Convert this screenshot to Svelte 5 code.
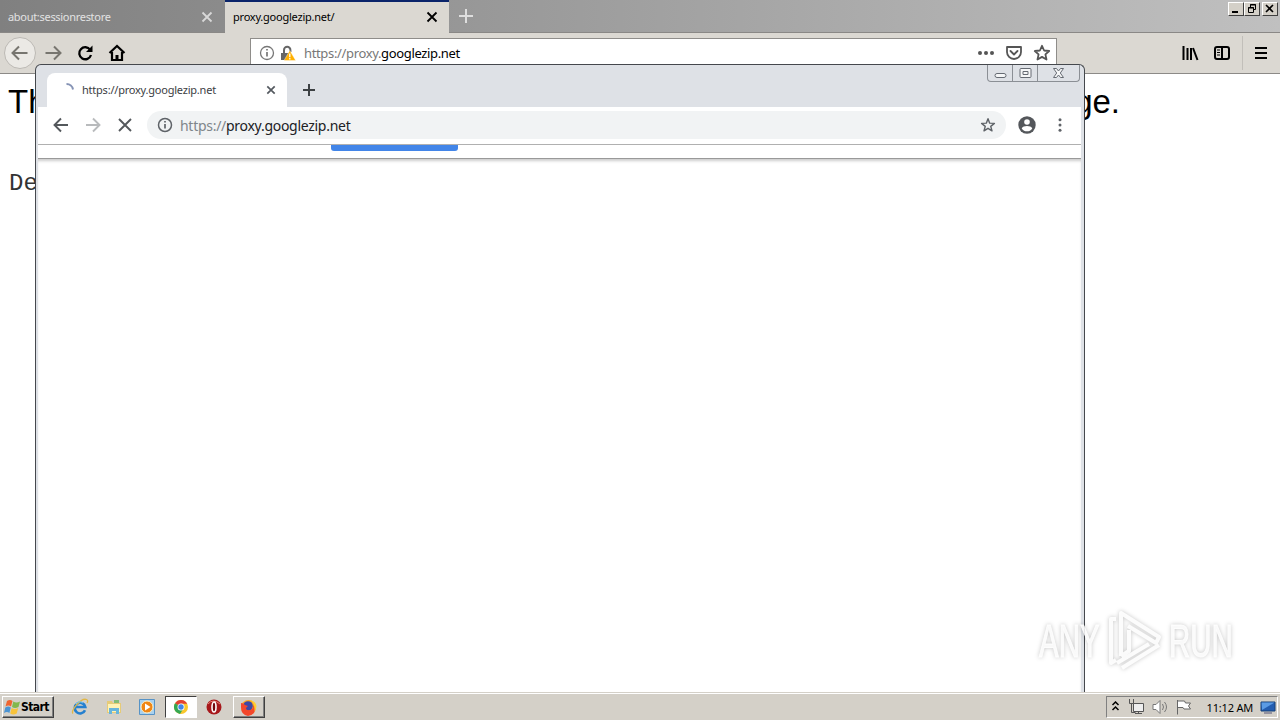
<script>
  const siteHost = 'googlezip.net';
  const tabs = [
    { title: 'about:sessionrestore', active: false },
    { title: 'proxy.googlezip.net/', active: true }
  ];
  let clock = '11:12 AM';
</script>

<div class="desktop">
  <div class="firefox">
    <div class="ff-tabs">
      {#each tabs as tab}
        <div class="ff-tab" class:active={tab.active}>
          <span>{tab.title}</span>
          <svg width="12" height="12" viewBox="0 0 12 12"><path d="M1.5 1.5l9 9M10.500 1.500l-9 9" /></svg>
        </div>
      {/each}
      <svg class="ff-plus" width="16" height="16" viewBox="0 0 16 16"><path d="M8 1v14M1 8h14" /></svg>
      <div class="ff-controls">
        <button aria-label="Minimize"><svg width="14" height="12"><path d="M3 9h6" stroke="#000" stroke-width="2" /></svg></button>
        <button aria-label="Restore"><svg width="14" height="12" fill="none" stroke="#000"><path d="M5.500 4V1.500h5v5H9M5 2h6M3.500 4.500h5v5h-5zM3 5h6" /></svg></button>
        <button class="last" aria-label="Close"><svg width="14" height="12"><path d="M3 2l7 7M10 2l-7 7" stroke="#000" stroke-width="1.600" /></svg></button>
      </div>
    </div>

    <div class="ff-bar">
      <div class="ff-nav">
        <div class="round"><svg width="18" height="18" viewBox="0 0 18 18"><path d="M16.500 9H2M8 2.500L1.500 9 8 15.500" /></svg></div>
        <svg class="dim" width="18" height="18" viewBox="0 0 18 18"><path d="M1.500 9H16M10 2.500L16.500 9 10 15.500" /></svg>
        <svg width="18" height="18" viewBox="0 0 18 18"><path d="M14.200 5.800A6 6 0 1 0 15 11" stroke-width="2.300" /><path d="M16.500 1.500v6.500H10z" fill="#000" stroke="none" /></svg>
        <svg width="18" height="18" viewBox="0 0 18 18"><path d="M1.500 9L9 2l7.500 7M4 8v8h10V8" stroke-width="2.200" /><path d="M7.500 16v-5h3v5z" fill="#000" stroke="none" /></svg>
      </div>
      <div class="ff-url">
        <svg width="16" height="16" viewBox="0 0 16 16" fill="none" stroke="#777"><circle cx="8" cy="8" r="6.500" stroke-width="1.300" /><path d="M8 7v4.500M8 4v1.600" stroke-width="1.700" /></svg>
        <svg class="lock" width="16" height="16" viewBox="0 0 16 16"><path d="M4 8V5a3.200 3.200 0 0 1 6.400 0v2" fill="none" stroke="#666" stroke-width="2" /><path d="M1 8h10v7H1z" fill="#666" /><path d="M9.800 5.500L15.700 15.500H4z" fill="#ffb000" stroke="#fff" stroke-width=".4" /><path d="M9.800 8.500v3.700M9.800 13v1.500" stroke="#fff" stroke-width="1.300" /></svg>
        <span class="address"><i>https://proxy.</i>{siteHost}</span>
        <svg width="18" height="16" viewBox="0 0 18 16" fill="#555"><circle cx="3" cy="8" r="2" /><circle cx="9" cy="8" r="2" /><circle cx="15" cy="8" r="2" /></svg>
        <svg width="18" height="16" viewBox="0 0 18 16" fill="none" stroke="#555" stroke-width="1.800" stroke-linecap="round" stroke-linejoin="round"><path d="M2 2h14v5a7 7 0 0 1-14 0zM5.500 6l3.500 3.500L12.500 6" /></svg>
        <svg width="18" height="18" viewBox="0 0 18 18" fill="none" stroke="#555" stroke-width="1.800" stroke-linejoin="round"><path d="M9 1.800l2.100 4.700 5.100.5-3.800 3.400 1.100 5.100L9 12.900l-4.500 2.600 1.100-5.100L1.800 7l5.100-.5z" /></svg>
      </div>
      <div class="ff-tools">
        <svg width="18" height="16" viewBox="0 0 18 16" stroke="#000" stroke-width="2"><path d="M2.500 1v14M6.500 3v12M10 3v12M12 3l4.500 12" /></svg>
        <svg width="18" height="16" viewBox="0 0 18 16" fill="none" stroke="#000" stroke-width="2"><rect x="2" y="2" width="14" height="12" rx="2" /><path d="M9 2v12" /><path d="M4 5h3M4 7.500h3M4 10h3" stroke-width="1" /></svg>
        <div class="split"></div>
        <svg width="16" height="16" viewBox="0 0 16 16" stroke="#000" stroke-width="2"><path d="M2 3h12M2 8h12M2 13h12" /></svg>
      </div>
    </div>

    <div class="ff-page">
      <h1><span>Th</span><span>ge.</span></h1>
      <pre>De</pre>
    </div>
  </div>

  <div class="taskbar">
    <button class="start">
      <svg width="17" height="16" viewBox="0 0 17 16"><path d="M3 2q3-2 5.500 0L7 7.500q-2.500-2-5.500 0z" fill="#ef6530" /><path d="M9.300 2.500q3 2 6.700 0l-1.500 5.500q-3.500 2-6.500 0z" fill="#82b84d" /><path d="M1.300 8.500q3-2 5.500 0L5.400 14Q3 12 0 14z" fill="#4b94d3" /><path d="M7.700 9q3 2 6.500 0l-1.500 5.500q-3.500 2-6.500 0z" fill="#f8c33a" /></svg>
      Start
    </button>
    <div class="quick">
      <svg width="18" height="18" viewBox="0 0 18 18" fill="none"><path d="M14 12.200A5.300 5.300 0 1 1 14.300 9H5" stroke="#2580cf" stroke-width="2.600" /><path d="M2 15.500C-1 13 10-.5 15.500 1.500q2 1 .5 3.500" stroke="#e1b745" stroke-width="1.300" /><path d="M5 6q3-4 7-1" stroke="#75c9f2" /></svg>
      <svg width="18" height="18" viewBox="0 0 18 18"><path d="M2 3h5l1 2h8v10H2z" fill="#e6cb78" /><path d="M3 6h12v8H3z" fill="#fff3b5" /><path d="M4 10h10v6h-3v-3H7v3H4z" fill="#68b5dc" /><path d="M9 2h5v3H9z" fill="#83bd78" /></svg>
      <svg width="18" height="18" viewBox="0 0 18 18"><path d="M1.500 1.500h15v15h-15z" fill="#a8d1ef" stroke="#5793c6" /><circle cx="9" cy="9" r="6" fill="#ef8614" stroke="#fff0c5" /><path d="M7 5.500v7L12.500 9z" fill="#fff" /></svg>
      <div class="task pressed">
        <svg width="16" height="16" viewBox="0 0 16 16"><circle cx="8" cy="8" r="7" fill="#f9c72c" /><path d="M8 8L2 4.300A7 7 0 0 1 14.200 4.700H8z" fill="#e34133" /><path d="M8 8l-6-3.700a7 7 0 0 0 5 10.600l3.500-5.500z" fill="#35a853" /><circle cx="8" cy="8" r="3.500" fill="#fff" /><circle cx="8" cy="8" r="2.700" fill="#4285e8" /></svg>
      </div>
      <svg class="opera" width="16" height="16" viewBox="0 0 16 16"><circle cx="8" cy="8" r="7.500" fill="#a7181b" /><path d="M2 5q5-6 12 0" fill="none" stroke="#e78074" stroke-width="1" /><ellipse cx="8" cy="8" rx="2" ry="5" fill="#74080d" stroke="#fff" stroke-width="1.600" /></svg>
      <div class="task">
        <svg width="17" height="17" viewBox="0 0 17 17"><circle cx="8.500" cy="8.500" r="7.500" fill="#ffa51c" /><circle cx="8" cy="7" r="4.800" fill="#3d48a5" /><path d="M1 4q3 0 4 2l3 1q-2 1-2 3 3 3 7-1v-3q3 4 1 8-3 3-6 3-7-1-7-9z" fill="#f3472b" /><path d="M9.500 1q6 3 5 11 2-2 2-5-1-5-7-6z" fill="#ffcf35" /></svg>
      </div>
    </div>
    <div class="tray">
      <svg width="9" height="12" viewBox="0 0 9 12" fill="none" stroke="#000" stroke-width="1.500"><path d="M1.500 4l3-3 3 3M1.500 9l3-3 3 3" /></svg>
      <svg width="18" height="18" viewBox="0 0 18 18" fill="#eee" stroke="#555"><path d="M6.500 5.500h10v8h-10zM8 15.500h7M11.500 13.500v2" /><path d="M2.500 1v4.500h4V1M4.500 5.500v9h4" fill="none" /></svg>
      <svg width="18" height="18" viewBox="0 0 18 18" fill="#fff" stroke="#777"><path d="M2 6.500h3l4-4v13l-4-4H2z" /><path d="M11.500 6q2 3 0 6M13.500 4q4 5 0 10" fill="none" /></svg>
      <svg width="18" height="18" viewBox="0 0 18 18" fill="#fff" stroke="#666"><path d="M2.500 2v14.500M2.500 3h7l1 2h5l-2 3 2 3H9l-1-1.500H2.500z" /></svg>
      <span>{clock}</span>
      <svg width="16" height="16" viewBox="0 0 16 16"><path d="M1 3h14v9H1z" fill="#235db0" stroke="#174176" /><path d="M1.500 3.500h13L2 11z" fill="#5b9be4" /><path d="M4 14h8" stroke="#557" /></svg>
    </div>
  </div>

  <div class="chrome">
    <div class="cr-strip">
      <div class="cr-tab">
        <svg width="16" height="16" viewBox="0 0 16 16" fill="none" stroke="#8593b5" stroke-width="2"><path d="M6.500 2A6.500 6.500 0 0 1 13 7.500" /></svg>
        <span>https://proxy.{siteHost}</span>
        <svg width="10" height="10" viewBox="0 0 10 10" stroke="#555a60" stroke-width="1.700"><path d="M1.300 1.300l7.400 7.400M8.700 1.300L1.300 8.700" /></svg>
      </div>
      <svg class="cr-plus" width="14" height="14" viewBox="0 0 14 14" stroke="#3c4043" stroke-width="2"><path d="M7 1v12M1 7h12" /></svg>
      <div class="cr-controls">
        <div><svg width="13" height="13" viewBox="0 0 13 13"><rect x="1" y="6.500" width="11" height="4" rx="2" /></svg></div>
        <div><svg width="13" height="13" viewBox="0 0 13 13"><rect x="1" y="1.500" width="11" height="9" rx="1" /><path d="M4 4.500h5v3H4z" /></svg></div>
        <div class="wide"><svg width="13" height="13" viewBox="0 0 13 13"><path d="M1.500 1.500h3l2 2.500 2-2.500h3L8.300 6l3.200 4.500h-3l-2-2.500-2 2.500h-3L4.700 6z" /></svg></div>
      </div>
    </div>
    <div class="cr-bar">
      <svg width="16" height="16" viewBox="0 0 16 16" stroke="#54585c"><path d="M15 8H2M8 1.500L1.500 8 8 14.500" /></svg>
      <svg width="16" height="16" viewBox="0 0 16 16" stroke="#b9bbbd"><path d="M1 8h13M8 1.500L14.500 8 8 14.500" /></svg>
      <svg width="16" height="16" viewBox="0 0 16 16" stroke="#54585c"><path d="M2 2l12 12M14 2L2 14" /></svg>
      <div class="cr-url">
        <svg width="16" height="16" viewBox="0 0 16 16" stroke="#5f6368"><circle cx="8" cy="8" r="6.500" stroke-width="1.500" /><path d="M8 7v4.500M8 4v1.600" stroke-width="1.700" /></svg>
        <span class="address"><i>https://</i>proxy.{siteHost}</span>
        <svg width="16" height="16" viewBox="0 0 18 18" stroke="#5f6368" stroke-linejoin="round"><path d="M9 2l1.900 4.900 5.300.3-4.100 3.300 1.400 5.100L9 12.700l-4.500 2.900 1.400-5.100-4.100-3.300 5.300-.3z" /></svg>
      </div>
      <svg class="avatar" width="18" height="18" viewBox="0 0 18 18" stroke="none"><circle cx="9" cy="9" r="8.700" fill="#54575b" /><circle cx="9" cy="6" r="2.800" fill="#fff" /><path d="M3.700 12.400c1.500-3.200 9.100-3.200 10.600 0-2.500 3.800-8.100 3.800-10.600 0z" fill="#fff" /></svg>
      <svg width="16" height="16" viewBox="0 0 16 16" stroke="none"><g fill="#5f6368"><circle cx="8" cy="2.800" r="1.500" /><circle cx="8" cy="8" r="1.500" /><circle cx="8" cy="13.200" r="1.500" /></g></svg>
    </div>
    <div class="infobar"><div class="blue"></div></div>
    <div class="cr-page"></div>
  </div>

  <div class="watermark">
    <span>ANY</span>
    <svg width="60" height="64" viewBox="0 0 60 64"><path d="M11 10H6v44l5-3M16 47V4l38 24-3 6-28-17M16 47l8-5V21M17 59l37-23M12 54l32-19" /></svg>
    <span>RUN</span>
  </div>
</div>

<style>
  :global(body) {
    margin: 0;
    overflow: hidden;
  }

  .desktop {
    position: relative;
    width: 1280px;
    height: 720px;
    overflow: hidden;
    display: flex;
    flex-direction: column;
    background: #fff;
    font-family: "Noto Sans", "DejaVu Sans", sans-serif;
    color: #000;
  }

  svg {
    flex-shrink: 0;
    display: block;
  }

  button {
    padding: 0;
    border: 0;
    font: inherit;
  }

  i {
    font-style: normal;
  }

  .firefox {
    flex: 1;
    min-height: 0;
  }

  .ff-tabs {
    display: flex;
    height: 33px;
    box-sizing: border-box;
    border-bottom: 1px solid #8a8886;
    background: linear-gradient(90deg, #808080, #c0c0c0);
  }

  .ff-tab {
    width: 225px;
    height: 32px;
    box-sizing: border-box;
    padding: 2px 12px 0 8px;
    display: flex;
    align-items: center;
    justify-content: space-between;
    font-size: 11px;
    letter-spacing: -0.3px;
    color: #e2e2e2;
  }

  .ff-tab span {
    margin-top: -1px;
  }

  .ff-tab svg {
    stroke: #d8d8d8;
    stroke-width: 1.8;
  }

  .ff-tab.active {
    width: 224px;
    height: 33px;
    border-top: 2px solid #0a246a;
    padding: 0 11px 1px 8px;
    background: #dbd8d2;
    letter-spacing: -0.23px;
    color: #000;
  }

  .ff-tab.active svg {
    stroke: #000;
  }

  .ff-plus {
    margin: 8px 0 0 9px;
    stroke: #dedede;
    stroke-width: 2;
  }

  .ff-controls {
    display: flex;
    margin: 2px 2px 0 auto;
  }

  .ff-controls button {
    width: 16px;
    height: 14px;
    background: #d4d0c8;
    border: 1px solid;
    border-color: #fff #404040 #404040 #fff;
  }

  .ff-controls button.last {
    margin-left: 2px;
  }

  .ff-bar {
    height: 41px;
    box-sizing: border-box;
    border-bottom: 1px solid #8c8a87;
    background: #dbd8d2;
    display: flex;
    align-items: center;
  }

  .ff-nav {
    display: flex;
    align-items: center;
    gap: 14px;
    padding-left: 4px;
    width: 246px;
  }

  .ff-nav svg {
    fill: none;
    stroke: #000;
    stroke-width: 2;
  }

  .ff-nav .round {
    width: 32px;
    height: 32px;
    box-sizing: border-box;
    border: 1px solid #bcb9b4;
    border-radius: 50%;
    display: grid;
    place-items: center;
    background: #ebe9e5;
    margin-right: -6px;
  }

  .ff-nav .round svg,
  .ff-nav .dim {
    stroke: #77756f;
  }

  .ff-url {
    width: 807px;
    height: 30px;
    box-sizing: border-box;
    border: 1px solid #8f8d8a;
    background: #fff;
    display: flex;
    align-items: center;
    gap: 10px;
    padding: 0 5px 0 8px;
  }

  .ff-url .lock {
    margin: 0 -2px 0 -5px;
  }

  .address {
    flex: 1;
    white-space: nowrap;
  }

  .ff-url .address {
    font-size: 13px;
    letter-spacing: -0.35px;
  }

  .ff-url i {
    color: #777;
  }

  .ff-tools {
    display: flex;
    align-items: center;
    margin-left: auto;
    padding-right: 11px;
    gap: 14px;
  }

  .split {
    width: 1px;
    height: 34px;
    background: #c2bfba;
    margin: 0 -4px 0 -3px;
  }

  h1 {
    display: flex;
    justify-content: space-between;
    width: 1112px;
    margin: 0;
    padding: 8px 0 0 8px;
    font: 33px/40px "Liberation Sans", Arial, sans-serif;
  }

  pre {
    margin: 48px 0 0 9px;
    font: 24px/28px "Liberation Mono", monospace;
    color: #333;
  }

  .taskbar {
    height: 28px;
    box-sizing: border-box;
    border-top: 1px solid #d4d0c8;
    box-shadow: inset 0 1px #fff;
    background: #d4d0c8;
    display: flex;
    align-items: center;
    padding: 1px 2px 0;
  }

  .start,
  .task {
    height: 22px;
    box-sizing: border-box;
    background: #d4d0c8;
    border: 1px solid;
    border-color: #fff #404040 #404040 #fff;
    box-shadow: inset -1px -1px #808080;
  }

  .start {
    width: 52px;
    display: flex;
    align-items: center;
    padding-left: 1px;
    font: bold 12px "DejaVu Sans Condensed", sans-serif;
    letter-spacing: -0.6px;
  }

  .quick {
    display: flex;
    align-items: center;
    padding-left: 17px;
    gap: 15.5px;
  }

  .task {
    width: 32px;
    display: grid;
    place-items: center;
  }

  .task.pressed {
    background: #fff;
    border-color: #404040 #fff #fff #404040;
    box-shadow: none;
    margin: 0 -6px 0 -7px;
  }

  .quick .opera {
    margin-right: -5px;
  }

  .tray {
    width: 172px;
    height: 22px;
    box-sizing: border-box;
    margin-left: auto;
    padding: 0 1px 0 4px;
    border: 1px solid;
    border-color: #808080 #fff #fff #808080;
    display: flex;
    align-items: center;
    gap: 6px;
    font-size: 11px;
    letter-spacing: -0.2px;
    white-space: nowrap;
  }

  .tray svg:nth-child(n + 2):nth-child(-n + 4) {
    margin: 0 -1px 0 1px;
  }

  .tray span {
    margin: 0 1px 0 auto;
  }

  .chrome {
    position: absolute;
    left: 35px;
    top: 64px;
    width: 1050px;
    height: 628px;
    box-sizing: border-box;
    border: 1px solid #45484d;
    border-bottom: 0;
    border-radius: 6px 6px 0 0;
    padding: 0 3px 0 2px;
    background: #dee1e6;
    overflow: hidden;
    display: flex;
    flex-direction: column;
  }

  .cr-strip {
    height: 42px;
    display: flex;
    align-items: flex-end;
  }

  .cr-tab {
    width: 240px;
    height: 34px;
    box-sizing: border-box;
    margin-left: 9px;
    padding: 0 11px 0 13px;
    border-radius: 8px 8px 0 0;
    background: #fff;
    display: flex;
    align-items: center;
    font-size: 11px;
    color: #3c4043;
  }

  .cr-tab span {
    flex: 1;
    margin: -2px 0 0 6px;
    letter-spacing: -0.22px;
  }

  .cr-plus {
    margin: 0 0 10px 15px;
  }

  .cr-controls {
    display: flex;
    align-self: flex-start;
    height: 17px;
    box-sizing: border-box;
    margin: 0 1px 0 auto;
    border: 1px solid #8b8f95;
    border-top: 0;
    border-radius: 0 0 4px 4px;
  }

  .cr-controls div {
    width: 24px;
    display: grid;
    place-items: center;
    border-right: 1px solid #8b8f95;
  }

  .cr-controls .wide {
    width: 41px;
    border-right: 0;
  }

  .cr-controls svg {
    fill: #f5f6f7;
    stroke: #666b73;
  }

  .cr-bar {
    height: 37px;
    box-sizing: border-box;
    background: #fff;
    display: flex;
    align-items: center;
    gap: 16px;
    padding: 0 13px 1px 15px;
  }

  .cr-bar svg {
    fill: none;
    stroke-width: 1.9;
  }

  .cr-url {
    flex: 1;
    height: 28px;
    box-sizing: border-box;
    border-radius: 14px;
    background: #f1f3f4;
    display: flex;
    align-items: center;
    gap: 7px;
    padding: 0 10px;
    margin: 0 -4px 0 -2px;
    font-size: 14px;
    letter-spacing: -0.28px;
    color: #202124;
  }

  .cr-url i {
    color: #80868b;
  }

  .cr-url svg {
    stroke-width: 1.6;
  }

  .infobar {
    height: 14px;
    box-sizing: border-box;
    border-top: 1px solid #b0b0b0;
    background: #fff;
  }

  .blue {
    width: 127px;
    height: 6px;
    margin-left: 293px;
    border-radius: 0 0 3px 3px;
    background: #4285e8;
  }

  .cr-page {
    flex: 1;
    background: #fff;
    border-top: 1px solid #999;
    box-shadow: inset 0 3px 3px -1px #ccc;
  }

  .watermark {
    position: absolute;
    left: 1039px;
    top: 609px;
    display: flex;
    align-items: center;
    font: 46px/64px "Liberation Sans", sans-serif;
    color: rgba(255, 255, 255, 0.85);
    filter: drop-shadow(0 0 2px rgba(0, 0, 0, 0.25));
  }

  .watermark span {
    width: 66px;
    transform: scaleX(0.64);
    transform-origin: left;
    -webkit-text-stroke: 1px rgba(255, 255, 255, 0.85);
  }

  .watermark svg {
    margin-right: 4px;
    fill: none;
    stroke: rgba(255, 255, 255, 0.9);
    stroke-width: 4;
    stroke-linejoin: round;
  }
</style>
